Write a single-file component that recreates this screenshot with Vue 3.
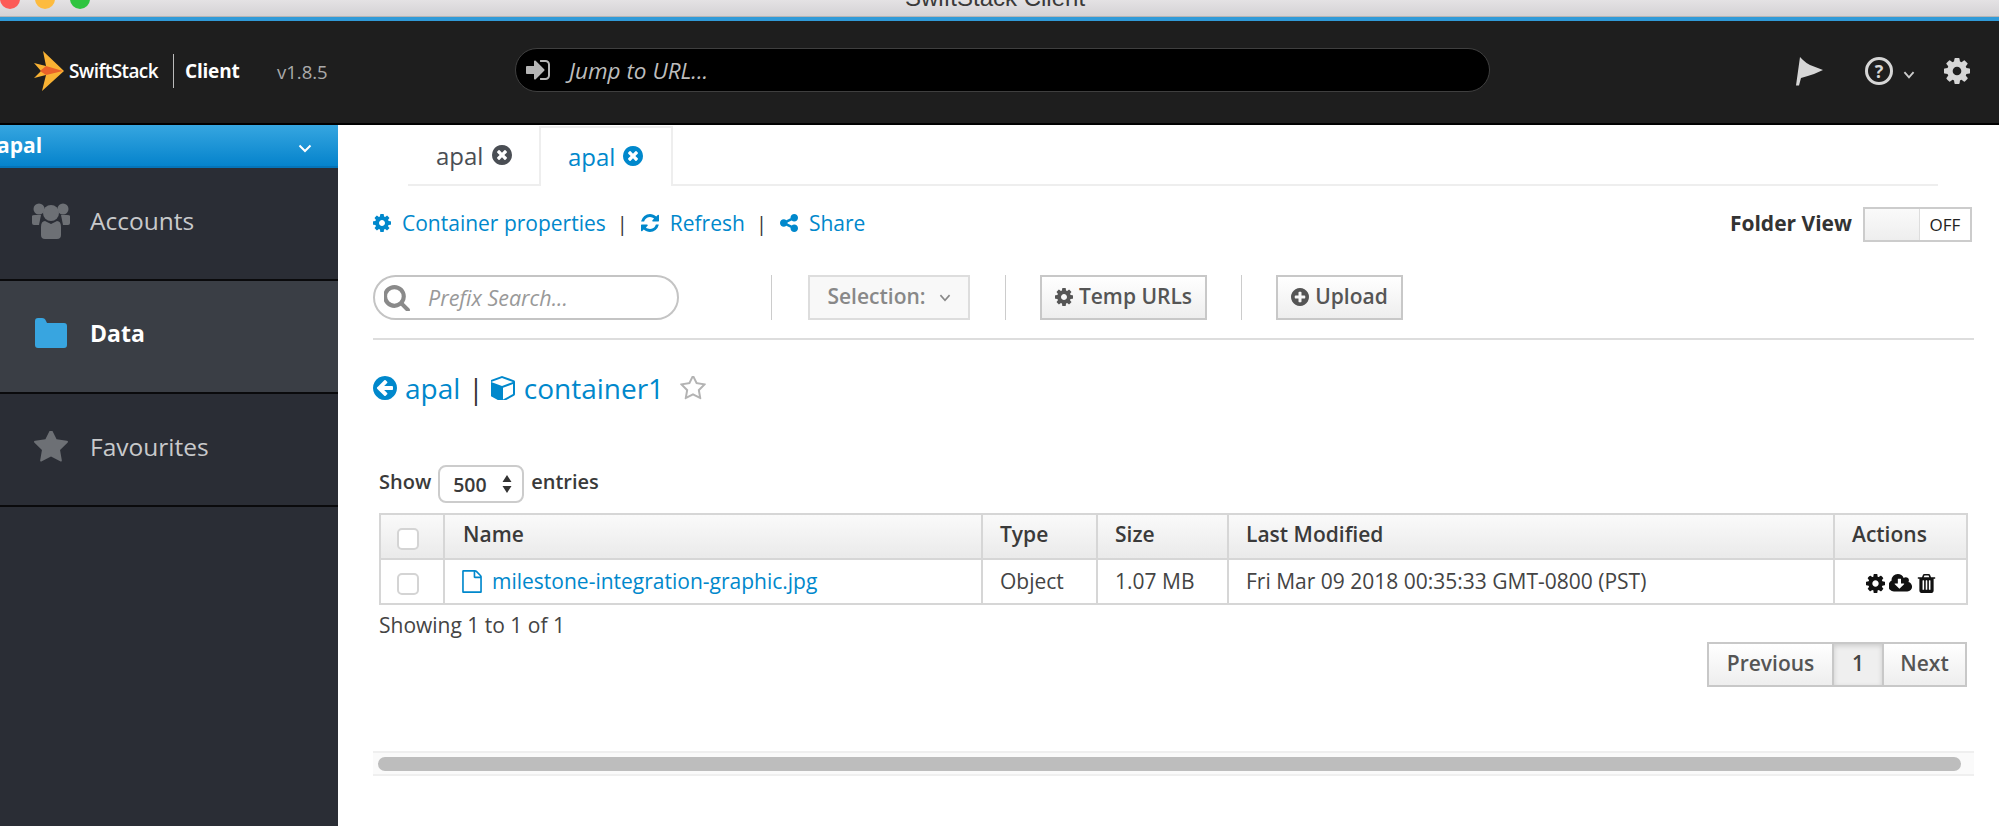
<script setup>
const p = {
  gear: 'M1152 896q0-106-75-181t-181-75-181 75-75 181 75 181 181 75 181-75 75-181zm512-109v222q0 12-8 23t-20 13l-185 28q-19 54-39 91 35 50 107 138 10 12 10 25t-9 23q-27 37-99 108t-94 71q-12 0-26-9l-138-108q-44 23-91 38-16 136-29 186-7 28-36 28h-222q-14 0-24.5-8.5t-11.5-21.5l-28-184q-49-16-90-37l-141 107q-10 9-25 9-14 0-25-11-126-114-165-168-7-10-7-23 0-12 8-23 15-21 51-66.5t54-70.5q-27-50-41-99l-183-27q-13-2-21-12.5t-8-23.5v-222q0-12 8-23t19-13l186-28q14-46 39-92-40-57-107-138-10-12-10-24 0-10 9-23 26-36 98.5-107.5t94.5-71.5q13 0 26 10l138 107q44-23 91-38 16-136 29-186 7-28 36-28h222q14 0 24.5 8.5t11.5 21.5l28 184q49 16 90 37l142-107q9-9 24-9 13 0 25 10 129 119 165 170 7 8 7 22 0 12-8 23-15 21-51 66.5t-54 70.5q26 50 41 98l183 28q13 2 21 12.5t8 23.5z',
  close: 'M1277 1122q0-26-19-45l-181-181 181-181q19-19 19-45 0-27-19-46l-90-90q-19-19-46-19-26 0-45 19l-181 181-181-181q-19-19-45-19-27 0-46 19l-90 90q-19 19-19 46 0 26 19 45l181 181-181 181q-19 19-19 45 0 27 19 46l90 90q19 19 46 19 26 0 45-19l181-181 181 181q19 19 45 19 27 0 46-19l90-90q19-19 19-46zm387-226q0 209-103 385.5t-279.5 279.5-385.5 103-385.5-103-279.5-279.5-103-385.5 103-385.5 279.5-279.5 385.5-103 385.5 103 279.5 279.5 103 385.5z',
  refresh: 'M1639 1056q0 5-1 7-64 268-268 434.5t-478 166.5q-146 0-282.5-55t-243.5-157l-129 129q-19 19-45 19t-45-19-19-45v-448q0-26 19-45t45-19h448q26 0 45 19t19 45-19 45l-137 137q71 66 161 102t187 36q134 0 250-65t186-179q11-17 53-117 8-23 30-23h192q13 0 22.5 9.5t9.5 22.5zm25-800v448q0 26-19 45t-45 19h-448q-26 0-45-19t-19-45 19-45l138-138q-148-137-349-137-134 0-250 65t-186 179q-11 17-53 117-8 23-30 23h-199q-13 0-22.5-9.5t-9.5-22.5v-7q65-268 270-434.5t480-166.5q146 0 284 55.5t245 156.5l130-129q19-19 45-19t45 19 19 45z',
  share: 'M1344 1024q133 0 226.5 93.5t93.5 226.5-93.5 226.5-226.5 93.5-226.5-93.5-93.5-226.5q0-12 2-34l-360-180q-92 86-218 86-133 0-226.5-93.5t-93.5-226.5 93.5-226.5 226.5-93.5q126 0 218 86l360-180q-2-22-2-34 0-133 93.5-226.5t226.5-93.5 226.5 93.5 93.5 226.5-93.5 226.5-226.5 93.5q-126 0-218-86l-360 180q2 22 2 34t-2 34l360 180q92-86 218-86z',
  search: 'M1216 832q0-185-131.5-316.5t-316.5-131.5-316.5 131.5-131.5 316.5 131.5 316.5 316.5 131.5 316.5-131.5 131.5-316.5zm512 832q0 52-38 90t-90 38q-54 0-90-38l-343-342q-179 124-399 124-143 0-273.5-55.5t-225-150-150-225-55.5-273.5 55.5-273.5 150-225 225-150 273.5-55.5 273.5 55.5 225 150 150 225 55.5 273.5q0 220-124 399l343 343q37 37 37 90z',
  plus: 'M1344 960v-128q0-26-19-45t-45-19h-256v-256q0-26-19-45t-45-19h-128q-26 0-45 19t-19 45v256h-256q-26 0-45 19t-19 45v128q0 26 19 45t45 19h256v256q0 26 19 45t45 19h128q26 0 45-19t19-45v-256h256q26 0 45-19t19-45zm320-64q0 209-103 385.5t-279.5 279.5-385.5 103-385.5-103-279.5-279.5-103-385.5 103-385.5 279.5-279.5 385.5-103 385.5 103 279.5 279.5 103 385.5z',
  back: 'M1408 960v-128q0-26-18.5-45t-45.5-19h-502l189-189q19-19 19-45t-19-45l-91-91q-18-18-45-18t-45 18l-362 362-91 91q-18 18-18 45t18 45l91 91 362 362q18 18 45 18t45-18l91-91q18-18 18-45t-18-45l-189-189h502q27 0 45.5-19t18.5-45zm256-64q0 209-103 385.5t-279.5 279.5-385.5 103-385.5-103-279.5-279.5-103-385.5 103-385.5 279.5-279.5 385.5-103 385.5 103 279.5 279.5 103 385.5z',
  cube: 'M896 1629l640-349v-636l-640 233v752zm-64-865l698-254-698-254-698 254zm832-252v768q0 35-18 65t-49 47l-704 384q-28 16-61 16t-61-16l-704-384q-31-17-49-47t-18-65v-768q0-40 23-73t61-47l704-256q22-8 44-8t44 8l704 256q38 14 61 47t23 73z',
  star: 'M1728 647q0 22-26 48l-363 354 86 500q1 7 1 20 0 21-10.5 35.5t-30.5 14.5q-19 0-40-12l-449-236-449 236q-22 12-40 12-21 0-31.5-14.5t-10.5-35.5q0-6 2-20l86-500-364-354q-25-27-25-48 0-37 56-46l502-73 225-455q19-41 49-41t49 41l225 455 502 73q56 9 56 46z',
  staro: 'M1201 1004l306-297-422-62-189-382-189 382-422 62 306 297-73 421 378-199 377 199zm527-357q0 22-26 48l-363 354 86 500q1 7 1 20 0 50-41 50-19 0-40-12l-449-236-449 236q-22 12-40 12-21 0-31.5-14.5t-10.5-35.5q0-6 2-20l86-500-364-354q-25-27-25-48 0-37 56-46l502-73 225-455q19-41 49-41t49 41l225 455 502 73q56 9 56 46z',
  file: 'M1596 380q28 28 48 76t20 88v1152q0 40-28 68t-68 28h-1344q-40 0-68-28t-28-68v-1600q0-40 28-68t68-28h896q40 0 88 20t76 48zm-444-244v376h376q-10-29-22-41l-313-313q-12-12-41-22zm384 1528v-1024h-416q-40 0-68-28t-28-68v-416h-768v1536h1280z',
  trash: 'M704 1376v-704q0-14-9-23t-23-9h-64q-14 0-23 9t-9 23v704q0 14 9 23t23 9h64q14 0 23-9t9-23zm256 0v-704q0-14-9-23t-23-9h-64q-14 0-23 9t-9 23v704q0 14 9 23t23 9h64q14 0 23-9t9-23zm256 0v-704q0-14-9-23t-23-9h-64q-14 0-23 9t-9 23v704q0 14 9 23t23 9h64q14 0 23-9t9-23zm-544-992h448l-48-117q-7-9-17-11h-317q-10 2-17 11zm928 32v64q0 14-9 23t-23 9h-96v948q0 83-47 143.5t-113 60.5h-832q-66 0-113-58.5t-47-141.5v-952h-96q-14 0-23-9t-9-23v-64q0-14 9-23t23-9h309l70-167q15-37 54-63t79-26h320q40 0 79 26t54 63l70 167h309q14 0 23 9t9 23z',
  cloud: 'M1216 928q0-14-9-23t-23-9h-224v-352q0-13-9.5-22.5t-22.5-9.5h-192q-13 0-22.5 9.5t-9.5 22.5v352h-224q-14 0-23 9t-9 23q0 12 10 24l351 351q9 9 23 9t23-9l352-352q9-11 9-23zm640 224q0 159-112.5 271.5t-271.5 112.5h-1088q-185 0-316.5-131.5t-131.5-316.5q0-130 70-240t188-165q-2-30-2-43 0-212 150-362t362-150q156 0 285.5 87t188.5 231q71-62 166-62 106 0 181 75t75 181q0 76-41 138 130 31 213.5 135.5t83.5 238.5z',
  signin: 'M1184 896q0 26-19 45l-544 544q-19 19-45 19t-45-19-19-45v-288h-448q-26 0-45-19t-19-45v-384q0-26 19-45t45-19h448v-288q0-26 19-45t45-19 45 19l544 544q19 19 19 45zm352-352v704q0 119-84.5 203.5t-203.5 84.5h-320q-13 0-22.5-9.5t-9.5-22.5q0-4-1-20t-.5-26.5 3-23.5 10-19.5 20.5-6.5h320q66 0 113-47t47-113v-704q0-66-47-113t-113-47h-312l-11.5-1-11.5-3-8-5.5-7-9-2-13.5q0-4-1-20t-.5-26.5 3-23.5 10-19.5 20.5-6.5h320q119 0 203.5 84.5t84.5 203.5z'
}
const columns = [
  { label: 'Name', w: 538 },
  { label: 'Type', w: 115 },
  { label: 'Size', w: 131 },
  { label: 'Last Modified', w: 606 },
  { label: 'Actions', w: 133 }
]
</script>

<template>
  <div class="app">
    <div class="titlebar">
      <div class="lights"><i class="red"></i><i class="yellow"></i><i class="green"></i></div>
      <span class="wintitle">SwiftStack Client</span>
    </div>
    <header class="header">
      <div class="logo">
        <svg class="bird" viewBox="0 0 30 40">
          <path fill="#f9b233" d="M9 0 L30 20 L8 40 L12 24 L0 27 L7 20 L0 12 L12 15 Z"/>
          <path fill="#e8622a" d="M12 15 L29 20 L12 24 L6 20 Z"/>
        </svg>
        <span class="brand">SwiftStack</span>
        <span class="brand-div"></span>
        <span class="client">Client</span>
        <span class="version">v1.8.5</span>
      </div>
      <div class="jump">
        <svg class="jump-icon" viewBox="0 0 1536 1792"><path fill="#b5b5b5" :d="p.signin"/></svg>
        <span>Jump to URL...</span>
      </div>
      <div class="head-icons">
        <svg class="flag" viewBox="0 0 27 29"><path fill="#d6d6d6" d="M0 28.5 L4 0 L7 3 Q10 6 14 8 L27 13 L18 17 Q12 19 5 21 L3 28.5 Z"/></svg>
        <span class="help">?</span>
        <svg class="mini-chev" viewBox="0 0 10 7"><path d="M1 1 L5 5.5 L9 1" fill="none" stroke="#ccc" stroke-width="1.6"/></svg>
        <svg class="head-gear" viewBox="128 128 1536 1536"><path fill="#d6d6d6" :d="p.gear"/></svg>
      </div>
    </header>
    <div class="body">
      <aside class="sidebar">
        <div class="account">
          <span>apal</span>
          <svg class="acc-chev" viewBox="0 0 14 9"><path d="M1.5 1.5 L7 7 L12.5 1.5" fill="none" stroke="#fff" stroke-width="2"/></svg>
        </div>
        <div class="nav">
          <svg class="nav-icon group" viewBox="0 0 38 36" fill="#6d7075">
            <circle cx="7" cy="6" r="5.5"/><circle cx="31" cy="6" r="5.5"/>
            <path d="M0 13 Q0 12 3 12 H9 L7 22 H2 Q0 22 0 20 Z"/><path d="M38 13 Q38 12 35 12 H29 L31 22 H36 Q38 22 38 20 Z"/>
            <circle cx="19" cy="10" r="8"/>
            <path d="M9 24 Q9 18 13 18 L19 21 L25 18 Q29 18 29 24 V32 Q29 36 25 36 H13 Q9 36 9 32 Z"/>
          </svg>
          <span>Accounts</span>
        </div>
        <div class="nav active">
          <svg class="nav-icon folder" viewBox="0 0 32 30"><path fill="#38a5e0" d="M0 3 Q0 0 3 0 H7 Q10 0 11 3 L12 5 H29 Q32 5 32 8 V27 Q32 30 29 30 H3 Q0 30 0 27 Z"/></svg>
          <span>Data</span>
        </div>
        <div class="nav">
          <svg class="nav-icon starnav" viewBox="64 128 1664 1600"><path fill="#6d7075" :d="p.star"/></svg>
          <span>Favourites</span>
        </div>
      </aside>
      <main class="main">
        <div class="tabs">
          <div class="tab">apal <svg class="tab-x" viewBox="128 128 1536 1536"><path fill="#4a4e54" :d="p.close"/></svg></div>
          <div class="tab on">apal <svg class="tab-x" viewBox="128 128 1536 1536"><path fill="#0088cc" :d="p.close"/></svg></div>
        </div>
        <div class="links">
          <a class="lnk"><svg class="li" viewBox="128 128 1536 1536"><path :d="p.gear"/></svg>Container properties</a>
          <span class="pipe">|</span>
          <a class="lnk"><svg class="li" viewBox="128 128 1536 1536"><path :d="p.refresh"/></svg>Refresh</a>
          <span class="pipe">|</span>
          <a class="lnk"><svg class="li" viewBox="128 128 1536 1536"><path :d="p.share"/></svg>Share</a>
          <div class="folder-view">
            <b>Folder View</b>
            <div class="toggle"><span class="knob"></span><span class="off">OFF</span></div>
          </div>
        </div>
        <div class="toolbar">
          <div class="search">
            <svg class="s-icon" viewBox="128 128 1600 1600"><path fill="#8a8a8a" :d="p.search"/></svg>
            <span>Prefix Search...</span>
          </div>
          <span class="vsep first"></span>
          <div class="btn disabled sel">Selection:
            <svg class="sel-chev" viewBox="0 0 10 7"><path d="M1 1 L5 5.5 L9 1" fill="none" stroke="#888" stroke-width="1.4"/></svg>
          </div>
          <span class="vsep"></span>
          <div class="btn temp"><svg class="bi" viewBox="128 128 1536 1536"><path :d="p.gear"/></svg>Temp URLs</div>
          <span class="vsep"></span>
          <div class="btn upl"><svg class="bi" viewBox="128 128 1536 1536"><path :d="p.plus"/></svg>Upload</div>
        </div>
        <div class="crumbs">
          <svg class="ci" viewBox="128 128 1536 1536"><path :d="p.back"/></svg>
          <a>apal</a>
          <span class="cpipe">|</span>
          <svg class="ci cube" viewBox="128 128 1536 1536"><path :d="p.cube"/></svg>
          <a>container1</a>
          <svg class="cstar" viewBox="64 128 1664 1600"><path fill="#b3b3b3" :d="p.staro"/></svg>
        </div>
        <div class="inner">
          <div class="show">
            <span>Show</span>
            <div class="pick"><span>500</span>
              <svg class="updown" viewBox="0 0 10 18"><path fill="#333" d="M5 0 L9.5 7 H.5 Z M5 18 L.5 11 H9.5 Z"/></svg>
            </div>
            <span>entries</span>
          </div>
          <table class="grid">
            <thead>
              <tr>
                <th class="chk"><span class="box"></span></th>
                <th v-for="c in columns" :key="c.label" :style="{ width: c.w + 'px' }">{{ c.label }}</th>
              </tr>
            </thead>
            <tbody>
              <tr>
                <td class="chk"><span class="box"></span></td>
                <td class="fname"><svg class="fi" viewBox="128 0 1536 1792"><path :d="p.file"/></svg>milestone-integration-graphic.jpg</td>
                <td>Object</td>
                <td>1.07 MB</td>
                <td>Fri Mar 09 2018 00:35:33 GMT-0800 (PST)</td>
                <td class="acts">
                  <svg class="ai" viewBox="128 128 1536 1536"><path :d="p.gear"/></svg>
                  <svg class="ai wide" viewBox="0 128 1920 1536"><path :d="p.cloud"/></svg>
                  <svg class="ai" viewBox="128 128 1536 1536"><path :d="p.trash"/></svg>
                </td>
              </tr>
            </tbody>
          </table>
          <div class="info">Showing 1 to 1 of 1</div>
          <div class="pager">
            <span class="pg prev">Previous</span>
            <span class="pg cur">1</span>
            <span class="pg next">Next</span>
          </div>
        </div>
        <div class="scroll"><span class="thumb"></span></div>
      </main>
    </div>
  </div>
</template>

<style>
html, body { margin: 0; background: #fff; overflow: hidden; }
</style>

<style scoped>
.app { width: 1999px; height: 826px; display: flex; flex-direction: column; font-family: "Open Sans", sans-serif; overflow: hidden; color: #444; }
.titlebar { height: 17px; flex: none; background: linear-gradient(#e4e2e4, #d3d1d4); display: flex; overflow: hidden; box-shadow: inset 0 -1px 0 #b5b5b5; }
.lights { width: 905px; flex: none; display: flex; gap: 15px; margin-top: -11px; box-sizing: border-box; }
.lights i { width: 20px; height: 20px; border-radius: 50%; display: block; flex: none; }
.red { background: #fc5b57; }
.yellow { background: #fdbb3f; }
.green { background: #2fc440; }
.wintitle { font-family: "Liberation Sans", sans-serif; font-size: 24px; line-height: 24px; margin-top: -14px; color: #3a3a3a; white-space: nowrap; }
.header { height: 100px; padding-bottom: 2px; flex: none; background: #1e1e1e; border-top: 4px solid #309ad8; border-bottom: 2px solid #000; display: flex; align-items: center; box-sizing: content-box; }
.logo { width: 515px; flex: none; box-sizing: border-box; padding-left: 34px; display: flex; align-items: center; color: #fff; }
.bird { width: 30px; height: 40px; flex: none; margin-right: 5px; }
.brand { font-size: 19px; font-weight: 600; letter-spacing: -0.6px; width: 104px; }
.brand-div { width: 1px; height: 34px; background: #bbb; flex: none; margin-right: 11px; }
.client { font-size: 19px; font-weight: 700; width: 92px; letter-spacing: -0.2px; }
.version { font-size: 18.5px; color: #aaa; font-weight: 400; }
.jump { width: 975px; height: 44px; margin-top: -2px; flex: none; box-sizing: border-box; background: #000; border: 1.5px solid #3f3f3f; border-radius: 22px; display: flex; align-items: center; padding-left: 9px; color: #bdbdbd; font-style: italic; font-size: 22.5px; }
.jump-icon { width: 26px; height: 28px; margin-right: 18px; }
.head-icons { flex: 1; display: flex; align-items: center; padding-left: 306px; }
.flag { width: 27px; height: 29px; margin-right: 42px; }
.help { width: 28px; height: 28px; flex: none; box-sizing: border-box; border: 3px solid #d6d6d6; border-radius: 50%; color: #d6d6d6; font-size: 18px; font-weight: 700; display: flex; align-items: center; justify-content: center; margin-right: 10px; }
.mini-chev { width: 12px; height: 8px; margin-right: 29px; margin-top: 8px; }
.head-gear { width: 26px; height: 26px; }
.body { flex: 1; display: flex; min-height: 0; }
.sidebar { width: 338px; flex: none; background: #2a2d35; }
.account { height: 43px; box-sizing: border-box; background: linear-gradient(#36a6e0, #0583cc); border-bottom: 2px solid #0574b8; display: flex; align-items: center; justify-content: space-between; color: #fff; font-size: 21px; font-weight: 700; padding-right: 26px; padding-bottom: 2px; }
.account > span { margin-left: -3px; }
.acc-chev { width: 14px; height: 9px; margin-top: 8px; }
.nav { height: 113px; box-sizing: border-box; border-bottom: 2px solid #0a0a0c; display: flex; align-items: center; font-size: 24.5px; color: #c8c9cb; position: relative; padding-left: 90px; padding-bottom: 7px; }
.nav.active { background: #3a3e45; color: #fff; font-weight: 700; font-size: 23px; }
.nav-icon { position: absolute; }
.group { left: 32px; top: 35px; width: 38px; height: 36px; }
.folder { left: 35px; top: 37px; width: 32px; height: 30px; }
.starnav { left: 34px; top: 37px; width: 34px; height: 33px; }
.main { flex: 1; min-width: 0; box-sizing: border-box; padding: 1px 25px 0 35px; }
.tabs { margin-right: 36px; margin-left: 35px; height: 60px; box-sizing: border-box; border-bottom: 2px solid #eee; display: flex; }
.tab { font-size: 24px; color: #4a4e54; width: 131px; height: 59px; box-sizing: border-box; padding-left: 28px; padding-bottom: 1px; display: flex; align-items: center; gap: 9px; white-space: nowrap; }
.tab.on { width: 134px; color: #0088cc; background: #fff; border: 2px solid #eee; border-bottom: 0; height: 60px; padding-left: 27px; padding-bottom: 2px; gap: 8px; }
.tab-x { width: 20px; height: 20px; flex: none; }
.links { margin-top: 22px; height: 30px; display: flex; align-items: center; font-size: 21px; }
.lnk { color: #0088cc; display: flex; align-items: center; white-space: nowrap; }
.li { width: 18px; height: 18px; fill: #0088cc; margin-right: 11px; flex: none; }
.pipe { color: #333; margin: 0 13px 0 11px; font-size: 20px; }
.folder-view { margin-left: auto; display: flex; align-items: center; gap: 11px; padding-right: 2px; font-size: 21px; color: #333; }
.toggle { width: 109px; height: 35px; margin-top: 3px; box-sizing: border-box; border: 2px solid #ccc; display: flex; background: #fff; }
.knob { width: 54px; background: linear-gradient(#fafafa, #eee); border-right: 1px solid #ddd; }
.off { flex: 1; text-align: center; font-size: 17px; line-height: 32px; color: #222; }
.toolbar { margin-top: 37px; height: 65px; box-sizing: border-box; border-bottom: 2px solid #ddd; display: flex; align-items: flex-start; }
.search { width: 306px; height: 45px; box-sizing: border-box; border: 2px solid #c4c4c4; border-radius: 23px; display: flex; align-items: center; padding-left: 9px; font-style: italic; font-size: 21.5px; color: #999; flex: none; }
.s-icon { width: 26px; height: 26px; margin-right: 18px; flex: none; }
.vsep { width: 1px; height: 45px; background: #ccc; flex: none; margin: 0 34px; }
.vsep.first { margin-left: 92px; margin-right: 36px; }
.sel + .vsep { margin-left: 35px; }
.btn { height: 45px; box-sizing: border-box; border: 2px solid #c8c8c8; display: flex; align-items: center; justify-content: center; font-size: 21px; font-weight: 600; color: #555; flex: none; background: linear-gradient(#fff, #eee); white-space: nowrap; padding-bottom: 3px; }
.sel { width: 162px; color: #888; background: #f8f8f8; gap: 13px; border-color: #ddd; }
.sel-chev { width: 12px; height: 8px; margin-top: 4px; }
.temp { width: 167px; }
.upl { width: 127px; }
.bi { width: 18px; height: 18px; fill: #555; margin-right: 6px; flex: none; margin-top: 2px; }
.crumbs { margin-top: 28px; height: 40px; display: flex; align-items: center; font-size: 28px; color: #0088cc; }
.crumbs a { color: #0088cc; }
.ci { width: 24px; height: 24px; fill: #0088cc; flex: none; margin-right: 8px; }
.cube { margin-right: 9px; }
.cpipe { color: #333; margin: 0 7px 0 8px; }
.cstar { width: 26px; height: 25px; margin-left: 16px; }
.inner { padding: 0 7px 0 6px; }
.show { margin-top: 57px; height: 38px; display: flex; align-items: center; font-size: 20px; font-weight: 600; color: #3a3a3a; gap: 7px; margin-bottom: 10px; }
.show > span { margin-top: -5px; }
.pick { width: 86px; height: 38px; box-sizing: border-box; border: 2px solid #ccc; border-radius: 8px; display: flex; align-items: center; justify-content: space-between; padding: 0 10px 0 13px; font-weight: 600; font-size: 19.5px; }
.updown { width: 10px; height: 18px; }
.grid { border-collapse: collapse; width: 1587px; table-layout: fixed; font-size: 21px; }
.grid th, .grid td { border: 2px solid #d6d6d6; height: 45px; box-sizing: border-box; padding: 0 0 2px 17px; text-align: left; white-space: nowrap; color: #444; }
.grid th { background: linear-gradient(#fafafa, #eaeaea); font-weight: 600; color: #3a3a3a; padding-bottom: 5px; }
.grid th:nth-child(2) { padding-left: 18px; }
.grid th.chk, .grid td.chk { width: 64px; padding: 0 7px 0 0; text-align: center; }
.box { display: inline-block; width: 22px; height: 22px; box-sizing: border-box; border: 2px solid #d4d4d4; border-radius: 5px; vertical-align: middle; background: #fff; margin-right: 1px; }
.fname { color: #0088cc !important; }
.fi { width: 20px; height: 23px; fill: #0088cc; margin-right: 10px; vertical-align: -4px; }
.acts { text-align: center !important; padding: 0 !important; }
.ai { width: 19px; height: 19px; fill: #111; margin: 0 2px; vertical-align: -3px; }
.ai.wide { width: 24px; }
.info { margin-top: 7px; height: 26px; line-height: 26px; font-size: 21px; color: #444; }
.pager { margin-top: 4px; display: flex; justify-content: flex-end; height: 45px; }
.pg { height: 45px; box-sizing: border-box; border: 2px solid #c8c8c8; margin-left: -2px; display: flex; align-items: center; justify-content: center; padding-bottom: 3px; font-size: 21px; font-weight: 600; color: #555; background: linear-gradient(#fff, #eee); }
.prev { width: 127px; }
.next { width: 85px; }
.pg.cur { width: 52px; background: #efefef; box-shadow: inset 0 2px 5px rgba(0,0,0,.15); color: #444; }
.scroll { margin-top: 64px; height: 25px; box-sizing: border-box; background: #fafafa; border-top: 2px solid #efefef; border-bottom: 2px solid #efefef; display: flex; align-items: center; padding: 0 13px 0 5px; }
.thumb { flex: 1; height: 14px; background: #bdbdbd; border-radius: 7px; }
</style>
